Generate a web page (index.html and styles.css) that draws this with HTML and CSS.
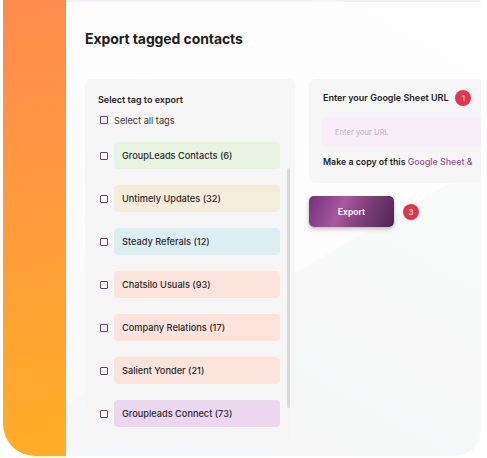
FILE: index.html
```html
<!DOCTYPE html>
<html>
<head>
<meta charset="utf-8">
<link rel="stylesheet" href="styles.css">
</head>
<body>
<div class="frame">
  <div class="sidebar"></div>
  <div class="main">
    <h1 class="title">Export tagged contacts</h1>
    <div class="columns">
      <div class="card tags-card">
        <div class="label">Select tag to export</div>
        <div class="check-row all"><span class="box"></span><span>Select all tags</span></div>
        <div class="tag-list">
          <div class="check-row"><span class="box"></span><span class="pill green">GroupLeads Contacts (6)</span></div>
          <div class="check-row"><span class="box"></span><span class="pill beige">Untimely Updates (32)</span></div>
          <div class="check-row"><span class="box"></span><span class="pill blue">Steady Referals (12)</span></div>
          <div class="check-row"><span class="box"></span><span class="pill peach">Chatsilo Usuals (93)</span></div>
          <div class="check-row"><span class="box"></span><span class="pill peach">Company Relations (17)</span></div>
          <div class="check-row"><span class="box"></span><span class="pill peach">Salient Yonder (21)</span></div>
          <div class="check-row"><span class="box"></span><span class="pill lilac">Groupleads Connect (73)</span></div>
          <div class="scrollbar"></div>
        </div>
      </div>
      <div class="right">
        <div class="card url-card">
          <div class="label-row"><span class="label">Enter your Google Sheet URL</span><span class="badge">1</span></div>
          <div class="input">Enter your URL</div>
          <div class="copy">Make a copy of this <span class="link">Google Sheet &amp;</span></div>
        </div>
        <div class="btn-row"><button class="export">Export</button><span class="badge">3</span></div>
      </div>
    </div>
  </div>
</div>
</body>
</html>
```

FILE: styles.css
```css
* { box-sizing: border-box; }
html, body { margin: 0; padding: 0; background: #ffffff; }
body { font-family: Inter, "Open Sans", "Liberation Sans", sans-serif; color: #262626; }

.frame {
  display: flex;
  width: 478px;
  height: 456px;
  margin-left: 3px;
}
.sidebar {
  width: 63px;
  flex: none;
  background: linear-gradient(170deg, #ff8b4f 0%, #ff9a3d 45%, #ffae27 100%);
  border-bottom-left-radius: 32px;
}
.main {
  flex: 1;
  overflow: hidden;
  border-top: 2px solid #f6eff6;
  border-bottom-right-radius: 26px;
  background:
    linear-gradient(150deg, rgba(255,255,255,0) 58%, rgba(244,245,246,0.55) 58.2%),
    linear-gradient(30deg, #f8f8f9 0%, #fcfcfc 50%, #fefefe 100%);
  padding: 0 0 0 19px;
}
.title {
  margin: 27px 0 0;
  font-size: 14px;
  font-weight: 700;
  line-height: 20px;
  color: #1e1e1e;
  letter-spacing: -0.1px;
}
.columns {
  display: flex;
  gap: 14px;
  margin-top: 30px;
  align-items: flex-start;
}
.card {
  background: #f6f6f6;
  border-radius: 6px;
}
.tags-card {
  width: 210px;
  height: 360px;
  padding: 15px 15px 12px 13px;
}
.label {
  font-size: 9px;
  font-weight: 600;
  line-height: 12px;
  color: #1e1e1e;
}
.check-row {
  display: flex;
  align-items: center;
  gap: 6px;
  padding-left: 2px;
  font-size: 9.2px;
  font-weight: 500;
  color: #2b2b2b;
}
.check-row.all {
  margin-top: 8px;
  height: 12px;
  font-weight: 400;
  color: #3a3a3a;
}
.box {
  width: 8px;
  height: 8px;
  flex: none;
  border: 1.3px solid #6e3f6e;
  border-radius: 1px;
}
.tag-list {
  position: relative;
  margin-top: 16px;
  display: flex;
  flex-direction: column;
  gap: 16px;
}
.pill {
  width: 166px;
  height: 27px;
  display: flex;
  align-items: center;
  padding-left: 8px;
  border-radius: 4px;
}
.green { background: #e9f3e2; }
.beige { background: #f5eddb; }
.blue { background: #ddeef3; }
.peach { background: #fce4dc; }
.lilac { background: #ecd8ee; }
.scrollbar {
  position: absolute;
  left: 189px;
  top: 26px;
  width: 3px;
  height: 240px;
  background: #d9d9d9;
  border-radius: 2px;
}
.right {
  flex: none;
  width: 200px;
}
.url-card {
  height: 104px;
  padding: 11px 0 0 14px;
  border-radius: 6px 0 0 6px;
}
.label-row {
  display: flex;
  align-items: center;
  gap: 7px;
  height: 16px;
}
.badge {
  width: 16px;
  height: 16px;
  border-radius: 50%;
  background: #df3550;
  color: #ffffff;
  font-size: 8px;
  display: flex;
  align-items: center;
  justify-content: center;
  flex: none;
}
.input {
  margin-top: 11px;
  margin-left: -1px;
  height: 30px;
  background: #f7eef8;
  border-radius: 5px 0 0 5px;
  padding-left: 13px;
  display: flex;
  align-items: center;
  font-size: 7.6px;
  color: #bdb2bd;
  white-space: nowrap;
}
.copy {
  margin-top: 9px;
  font-size: 8.8px;
  font-weight: 600;
  color: #1e1e1e;
  white-space: nowrap;
  line-height: 12px;
}
.link { color: #a24c9f; font-weight: 500; }
.btn-row {
  display: flex;
  align-items: center;
  gap: 9px;
  margin-top: 13px;
}
.export {
  width: 85px;
  height: 31px;
  border: none;
  border-radius: 5px;
  background: linear-gradient(115deg, #6f3470 0%, #a9579f 38%, #7a3e78 65%, #4f2550 100%);
  color: #ffffff;
  font-family: inherit;
  font-size: 8.6px;
  font-weight: 600;
  box-shadow: 0 2px 4px rgba(0,0,0,0.25);
}
```
